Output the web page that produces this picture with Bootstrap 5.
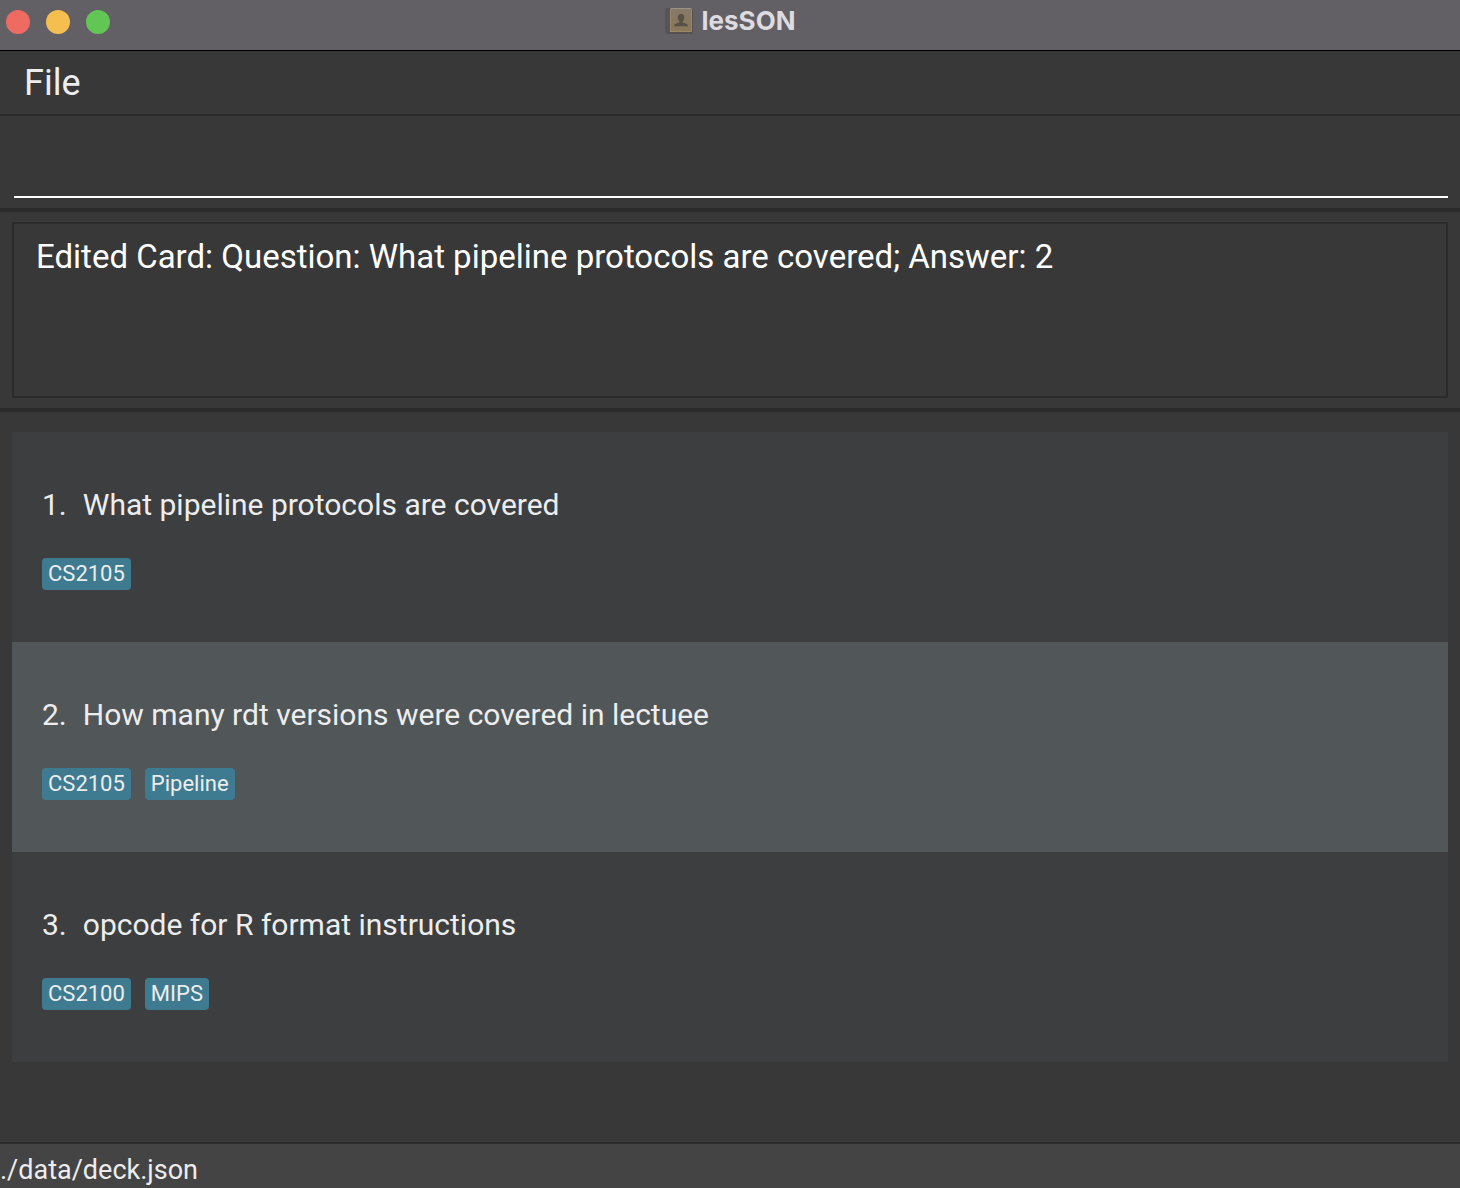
<!DOCTYPE html>
<html lang="en">
<head>
<meta charset="utf-8">
<meta name="viewport" content="width=device-width, initial-scale=1">
<title>lesSON</title>
<link href="https://cdn.jsdelivr.net/npm/bootstrap@5.3.0/dist/css/bootstrap.min.css" rel="stylesheet">
<style>
  body { background: #383838; color: #ededed; font-family: Roboto, "Liberation Sans", sans-serif; }
  .title-bar { height: 51px; background: #625f65; border-bottom: 1px solid #000; padding-bottom: 8px; }
  .title-side { padding: 2px 6px 0; }
  .window-controls { gap: 16px; }
  .dot { width: 24px; height: 24px; border-radius: 50%; border: 0; padding: 0; }
  .dot-close { background: #ed6b60; }
  .dot-min { background: #f5bf4f; }
  .dot-zoom { background: #62c655; }
  .window-title { font-family: Inter, "Liberation Sans", sans-serif; font-size: 26px; line-height: 30px; font-weight: 700; color: #dddbdf; gap: 9px; }
  .menu-bar { height: 65px; border-bottom: 2px solid #2b2b2b; padding-left: 24px; }
  .menu-entry { font-size: 36px; line-height: 40px; color: #ededed; background: none; border: 0; padding: 0; }
  .command-pane { padding: 20px 12px 10px 14px; border-bottom: 4px solid #2b2b2b; }
  .command-box { height: 62px; font-size: 33px; color: #fff; border-bottom: 2px solid #fff; background: none; }
  .result-pane { padding: 10px 12px; border-bottom: 4px solid #2b2b2b; }
  .result-box { height: 176px; font-size: 33px; line-height: 40px; color: #fff; background: none; border: 2px solid #2b2b2b; padding: 13px 22px; resize: none; }
  .deck-pane { padding: 20px 12px; }
  .deck-item { background: #3c3e3f; padding: 52px 30px; }
  .deck-item:nth-child(even) { background: #515658; }
  .question { font-size: 30px; line-height: 42px; gap: 16px; margin-bottom: 32px; }
  .tag-row { gap: 14px; }
  .tag { background: #3e7b91; color: #ededed; font-size: 22px; line-height: 32px; border-radius: 4px; padding: 0 6px; }
  .status-bar { height: 46px; background: #444; border-top: 2px solid #2b2b2b; font-size: 27px; line-height: 52px; }
</style>
</head>
<body class="d-flex flex-column min-vh-100">
<header class="title-bar row g-0 align-items-center flex-shrink-0">
  <div class="title-side window-controls col d-flex">
    <button type="button" class="dot dot-close" aria-label="Close"></button>
    <button type="button" class="dot dot-min" aria-label="Minimize"></button>
    <button type="button" class="dot dot-zoom" aria-label="Zoom"></button>
  </div>
  <div class="window-title col-auto d-flex align-items-center">
    <svg width="28" height="28" viewBox="0 0 28 28" aria-hidden="true">
      <defs>
        <linearGradient id="cover" x1="0" y1="0" x2="0" y2="1">
          <stop offset="0" stop-color="#877a6a"/>
          <stop offset="1" stop-color="#8a7759"/>
        </linearGradient>
      </defs>
      <rect x="1" y="2" width="27" height="25" rx="2" fill="#57504f"/>
      <rect x="0" y="1" width="5" height="25" rx="1" fill="#56535a"/>
      <rect x="5" y="1" width="22" height="24" rx="1" fill="url(#cover)"/>
      <path d="M6 1.500H26" stroke="#9a9188"/>
      <path d="M5.500 2V25M6 24.500H26.500V2" fill="none" stroke="#9b8865"/>
      <path d="M16 7c-2.400 0-3.500 1.500-3.300 3.700.1 1.500.7 2.600 1.500 3.300v1.400c-1.800.6-5 1-5.200 3.800h14c-.2-2.800-3.400-3.200-5.200-3.800v-1.400c.8-.7 1.400-1.800 1.500-3.300.2-2.200-.9-3.700-3.300-3.700z" fill="#5a5146"/>
    </svg>
    <span>lesSON</span>
  </div>
  <div class="title-side col"></div>
</header>
<nav class="menu-bar d-flex align-items-center flex-shrink-0" aria-label="Menu">
  <button type="button" class="menu-entry">File</button>
</nav>
<div class="command-pane">
  <input type="text" class="command-box d-block w-100 border-top-0 border-start-0 border-end-0 px-2" aria-label="Command">
</div>
<div class="result-pane">
  <textarea class="result-box d-block w-100" readonly aria-label="Result">Edited Card: Question: What pipeline protocols are covered; Answer: 2</textarea>
</div>
<main class="deck-pane flex-grow-1">
  <ol class="list-unstyled mb-0">
    <li class="deck-item">
      <div class="question d-flex"><span>1.</span><span>What pipeline protocols are covered</span></div>
      <div class="tag-row d-flex"><span class="tag">CS2105</span></div>
    </li>
    <li class="deck-item">
      <div class="question d-flex"><span>2.</span><span>How many rdt versions were covered in lectuee</span></div>
      <div class="tag-row d-flex"><span class="tag">CS2105</span><span class="tag">Pipeline</span></div>
    </li>
    <li class="deck-item">
      <div class="question d-flex"><span>3.</span><span>opcode for R format instructions</span></div>
      <div class="tag-row d-flex"><span class="tag">CS2100</span><span class="tag">MIPS</span></div>
    </li>
  </ol>
</main>
<footer class="status-bar flex-shrink-0">./data/deck.json</footer>
<script src="https://cdn.jsdelivr.net/npm/bootstrap@5.3.0/dist/js/bootstrap.bundle.min.js"></script>
</body>
</html>
